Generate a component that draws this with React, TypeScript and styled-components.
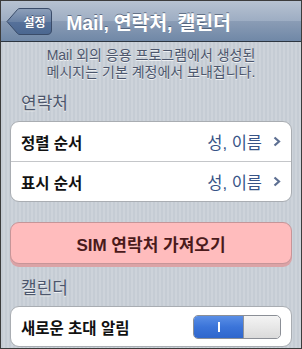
import styled, { createGlobalStyle } from "styled-components";

const GlobalStyle = createGlobalStyle`
  html, body {
    margin: 0;
    padding: 0;
    background: #ffffff;
  }
  * {
    box-sizing: border-box;
  }
`;

const FONT = `"Liberation Sans", "Noto Sans CJK KR", sans-serif`;

const Frame = styled.div`
  width: 302px;
  height: 349px;
  border: 1px solid #3c3c3c;
  overflow: hidden;
  font-family: ${FONT};
  background: repeating-linear-gradient(
    90deg,
    #c5ccd4 0 2px,
    #cdd3da 2px 4px
  );
`;

const NavBar = styled.header`
  height: 41px;
  display: grid;
  grid-template-columns: 1fr auto 1fr;
  align-items: center;
  padding: 0 6px 0 5px;
  background: linear-gradient(
    to bottom,
    #b7c2d1 0%,
    #9dadc3 50%,
    #8a9cb5 51%,
    #7088a7 100%
  );
  border-bottom: 1px solid #2d3641;
`;

const BackButton = styled.button`
  position: relative;
  justify-self: start;
  width: 46px;
  height: 27px;
  margin-top: 1px;
  padding: 0 0 0 11px;
  border: none;
  background: none;
  color: #ffffff;
  font-family: ${FONT};
  font-size: 12px;
  font-weight: 700;
  text-shadow: 0 -1px 0 rgba(30, 45, 70, 0.6);

  svg {
    position: absolute;
    inset: 0;
  }
  span {
    position: relative;
  }
`;

const Title = styled.h1`
  margin: 0 4px 0 0;
  color: #ffffff;
  font-size: 19.5px;
  font-weight: 700;
  letter-spacing: -0.2px;
  text-shadow: 0 -1px 0 rgba(40, 55, 80, 0.55);
  white-space: nowrap;
`;

const Content = styled.main`
  display: flex;
  flex-direction: column;
  padding: 0 9px;
`;

const Note = styled.p`
  margin: 5px -6px 0;
  text-align: center;
  color: #4c566c;
  font-size: 14px;
  line-height: 17px;
  text-shadow: 0 1px 0 rgba(255, 255, 255, 0.7);
`;

const SectionHeader = styled.h2<{ $top: number }>`
  margin: ${(p) => p.$top}px 0 8px 11px;
  color: #4c566c;
  font-size: 17px;
  font-weight: 400;
  line-height: 19px;
  text-shadow: 0 1px 0 rgba(255, 255, 255, 0.7);
`;

const Group = styled.ul`
  list-style: none;
  margin: 0;
  padding: 0;
  background: #ffffff;
  border: 1px solid #a9adb2;
  border-radius: 9px;
`;

const Row = styled.li`
  height: 39px;
  display: flex;
  align-items: center;
  padding: 0 9px 0 10px;
  & + & {
    height: 40px;
    border-top: 1px solid #c4c6c9;
  }
`;

const Label = styled.span`
  flex: 1;
  color: #111111;
  font-size: 15.5px;
  font-weight: 700;
`;

const Value = styled.span`
  color: #385487;
  font-size: 16.5px;
  margin-right: 11px;
`;

const Chevron = styled.svg`
  width: 8px;
  height: 11px;
  margin-right: 1px;
`;

const ActionButton = styled.button`
  margin-top: 20px;
  height: 42px;
  border: 1px solid #c69598;
  border-radius: 9px;
  background: #ffbcbd;
  box-shadow: 0 3px 0 #dba3a6;
  color: #4a1a1b;
  font-family: ${FONT};
  font-size: 17px;
  font-weight: 700;
`;

const Switch = styled.div<{ $on: boolean }>`
  display: flex;
  width: 88px;
  height: 24px;
  margin-right: 1px;
  border: 1px solid #8b8f96;
  border-radius: 5px;
  overflow: hidden;
`;

const SwitchTrack = styled.div`
  flex: 1;
  display: flex;
  align-items: center;
  justify-content: center;
  background: linear-gradient(to bottom, #5a8fe6 0%, #3b74d9 50%, #2f66cc 100%);
  &::after {
    content: "";
    width: 2px;
    height: 10px;
    background: #ffffff;
  }
`;

const SwitchKnob = styled.div`
  width: 37px;
  border-left: 1px solid #8f939a;
  border-radius: 0 4px 4px 0;
  background: linear-gradient(to bottom, #f4f4f4 0%, #e6e6e6 55%, #dadada 100%);
`;

const ArrowRight = () => (
  <Chevron viewBox="0 0 8 11">
    <path d="M1.5 1.5 L6 5.5 L1.5 9.5" fill="none" stroke="#5d6f92" strokeWidth="2.2" />
  </Chevron>
);

const BackShape = () => (
  <svg width="46" height="27" viewBox="0 0 46 27">
    <defs>
      <linearGradient id="bk" x1="0" y1="0" x2="0" y2="1">
        <stop offset="0" stopColor="#8ea0ba" />
        <stop offset="0.5" stopColor="#6a82a5" />
        <stop offset="0.51" stopColor="#56719a" />
        <stop offset="1" stopColor="#4b6790" />
      </linearGradient>
    </defs>
    <path
      d="M1 13.5 L11.5 1.5 Q12.3 0.5 14 0.5 L41 0.5 Q45.5 0.5 45.5 5 L45.5 22 Q45.5 26.5 41 26.5 L14 26.5 Q12.3 26.5 11.5 25.5 Z"
      fill="url(#bk)"
      stroke="#3a4c69"
    />
  </svg>
);

export default function App() {
  return (
    <>
      <GlobalStyle />
      <Frame>
        <NavBar>
          <BackButton>
            <BackShape />
            <span>설정</span>
          </BackButton>
          <Title>Mail, 연락처, 캘린더</Title>
        </NavBar>
        <Content>
          <Note>
            Mail 외의 응용 프로그램에서 생성된
            <br />
            메시지는 기본 계정에서 보내집니다.
          </Note>
          <SectionHeader $top={13}>연락처</SectionHeader>
          <Group>
            <Row>
              <Label>정렬 순서</Label>
              <Value>성, 이름</Value>
              <ArrowRight />
            </Row>
            <Row>
              <Label>표시 순서</Label>
              <Value>성, 이름</Value>
              <ArrowRight />
            </Row>
          </Group>
          <ActionButton>SIM 연락처 가져오기</ActionButton>
          <SectionHeader $top={15}>캘린더</SectionHeader>
          <Group>
            <Row>
              <Label>새로운 초대 알림</Label>
              <Switch $on>
                <SwitchTrack />
                <SwitchKnob />
              </Switch>
            </Row>
          </Group>
        </Content>
      </Frame>
    </>
  );
}
